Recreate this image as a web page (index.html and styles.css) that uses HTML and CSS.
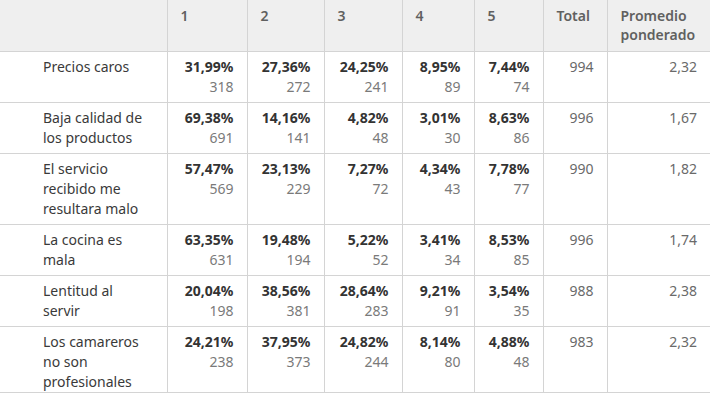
FILE: index.html
```html
<!DOCTYPE html>
<html lang="es">
<head>
<meta charset="utf-8">
<link rel="stylesheet" href="styles.css">
</head>
<body>
<table class="matrix">
  <colgroup>
    <col class="c-label"><col class="c1"><col class="c2"><col class="c3"><col class="c4"><col class="c5"><col class="c6"><col class="c7">
  </colgroup>
  <thead>
    <tr>
      <th></th><th>1</th><th>2</th><th>3</th><th>4</th><th>5</th><th>Total</th><th>Promedio ponderado</th>
    </tr>
  </thead>
  <tbody>
    <tr>
      <td class="label">Precios caros</td>
      <td><b>31,99%</b><span>318</span></td>
      <td><b>27,36%</b><span>272</span></td>
      <td><b>24,25%</b><span>241</span></td>
      <td><b>8,95%</b><span>89</span></td>
      <td><b>7,44%</b><span>74</span></td>
      <td class="num">994</td>
      <td class="num">2,32</td>
    </tr>
    <tr>
      <td class="label">Baja calidad de los productos</td>
      <td><b>69,38%</b><span>691</span></td>
      <td><b>14,16%</b><span>141</span></td>
      <td><b>4,82%</b><span>48</span></td>
      <td><b>3,01%</b><span>30</span></td>
      <td><b>8,63%</b><span>86</span></td>
      <td class="num">996</td>
      <td class="num">1,67</td>
    </tr>
    <tr>
      <td class="label">El servicio recibido me resultara malo</td>
      <td><b>57,47%</b><span>569</span></td>
      <td><b>23,13%</b><span>229</span></td>
      <td><b>7,27%</b><span>72</span></td>
      <td><b>4,34%</b><span>43</span></td>
      <td><b>7,78%</b><span>77</span></td>
      <td class="num">990</td>
      <td class="num">1,82</td>
    </tr>
    <tr>
      <td class="label">La cocina es mala</td>
      <td><b>63,35%</b><span>631</span></td>
      <td><b>19,48%</b><span>194</span></td>
      <td><b>5,22%</b><span>52</span></td>
      <td><b>3,41%</b><span>34</span></td>
      <td><b>8,53%</b><span>85</span></td>
      <td class="num">996</td>
      <td class="num">1,74</td>
    </tr>
    <tr>
      <td class="label">Lentitud al servir</td>
      <td><b>20,04%</b><span>198</span></td>
      <td><b>38,56%</b><span>381</span></td>
      <td><b>28,64%</b><span>283</span></td>
      <td><b>9,21%</b><span>91</span></td>
      <td><b>3,54%</b><span>35</span></td>
      <td class="num">988</td>
      <td class="num">2,38</td>
    </tr>
    <tr class="last">
      <td class="label">Los camareros no son profesionales</td>
      <td><b>24,21%</b><span>238</span></td>
      <td><b>37,95%</b><span>373</span></td>
      <td><b>24,82%</b><span>244</span></td>
      <td><b>8,14%</b><span>80</span></td>
      <td><b>4,88%</b><span>48</span></td>
      <td class="num">983</td>
      <td class="num">2,32</td>
    </tr>
  </tbody>
</table>
</body>
</html>
```

FILE: styles.css
```css
html, body {
  margin: 0;
  padding: 0;
  background: #ffffff;
}
.matrix {
  width: 710px;
  table-layout: fixed;
  border-collapse: collapse;
  font-family: "Noto Sans", "Open Sans", sans-serif;
  font-size: 14px;
  line-height: 20px;
  color: #333333;
}
.c-label { width: 167px; }
.c1 { width: 80px; }
.c2 { width: 77px; }
.c3 { width: 78px; }
.c4 { width: 72px; }
.c5 { width: 69px; }
.c6 { width: 64px; }
.c7 { width: 103px; }

.matrix th, .matrix td {
  border-left: 1px solid #d4d4d4;
  border-bottom: 1px solid #d4d4d4;
  vertical-align: top;
}
.matrix th:first-child, .matrix td:first-child {
  border-left: none;
}
.matrix thead th {
  background: #efefef;
  height: 51px;
  box-sizing: border-box;
  padding: 6px 13px 0 13px;
  text-align: left;
  font-weight: 600;
  color: #606060;
  line-height: 19px;
}
.matrix td {
  padding: 5px 13px 5px 13px;
  text-align: right;
}
.matrix td b {
  display: block;
  font-weight: 700;
  color: #333333;
}
.matrix td span {
  display: block;
  color: #7a7a7a;
}
.matrix td.label {
  text-align: left;
  padding-left: 43px;
  padding-right: 20px;
  color: #3a3a3a;
}
.matrix td.num {
  color: #6a6a6a;
}
.matrix tr.last td {
  padding-bottom: 0;
}
```
